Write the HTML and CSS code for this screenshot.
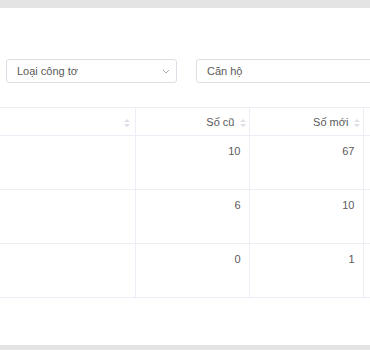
FILE: index.html
```html
<!DOCTYPE html>
<html lang="vi">
<head>
  <meta charset="UTF-8" />
  <title>Danh sách công tơ</title>
  <link rel="stylesheet" href="styles.css">
</head>
<body>
  <div class="card">
    <div class="filters">
      <div class="select select-type">
        <span>Loại công tơ</span>
        <svg class="chevron" width="8" height="5" viewBox="0 0 8 5"><path d="M1 1l3 3 3-3" fill="none" stroke="#a8abb2" stroke-width="1"/></svg>
      </div>
      <div class="select select-unit">
        <span>Căn hộ</span>
      </div>
    </div>

    <table class="meter-table">
      <colgroup>
        <col class="col-name">
        <col class="col-num">
        <col class="col-num">
        <col class="col-rest">
      </colgroup>
      <thead>
        <tr>
          <th class="th-name"><span class="sort"><svg width="6" height="8" viewBox="0 0 6 8"><path d="M3 0L6 3H0z M3 8L0 5h6z" fill="#dcdfe6"/></svg></span></th>
          <th class="th-num">Số cũ <span class="sort"><svg width="6" height="8" viewBox="0 0 6 8"><path d="M3 0L6 3H0z M3 8L0 5h6z" fill="#dcdfe6"/></svg></span></th>
          <th class="th-num">Số mới <span class="sort"><svg width="6" height="8" viewBox="0 0 6 8"><path d="M3 0L6 3H0z M3 8L0 5h6z" fill="#dcdfe6"/></svg></span></th>
          <th></th>
        </tr>
      </thead>
      <tbody>
        <tr><td></td><td class="num">10</td><td class="num">67</td><td></td></tr>
        <tr><td></td><td class="num">6</td><td class="num">10</td><td></td></tr>
        <tr><td></td><td class="num">0</td><td class="num">1</td><td></td></tr>
      </tbody>
    </table>
  </div>
</body>
</html>
```

FILE: styles.css
```css
body {
  margin: 0;
  background-color: #e4e4e4;
  font-family: "Liberation Sans", Arial, sans-serif;
  color: #5a5a5a;
  overflow: hidden;
}
.card {
  margin-top: 8px;
  height: 337px;
  background-color: #fff;
  overflow: hidden;
}
.filters {
  display: flex;
  padding: 51px 0 0 6px;
  gap: 19px;
}
.select {
  box-sizing: border-box;
  height: 24px;
  border: 1px solid #dcdfe6;
  border-radius: 3px;
  display: flex;
  align-items: center;
  padding: 0 6px 0 10px;
  font-size: 11px;
  color: #5a5a5a;
  flex-shrink: 0;
}
.select-type {
  width: 171px;
  justify-content: space-between;
}
.select-unit {
  width: 200px;
}
.meter-table {
  margin-top: 24px;
  border-collapse: collapse;
  table-layout: fixed;
  width: 423px;
  font-size: 11px;
}
.col-name {
  width: 135px;
}
.col-num {
  width: 114px;
}
.col-rest {
  width: 60px;
}
.meter-table th,
.meter-table td {
  box-sizing: border-box;
  border-top: 1px solid #ebeef5;
  border-bottom: 1px solid #ebeef5;
  border-left: 1px solid #ebeef5;
  padding: 0 8px;
}
.meter-table th:first-child,
.meter-table td:first-child {
  border-left: none;
}
.meter-table th {
  height: 28px;
  font-weight: normal;
  color: #5a5a5a;
  text-align: right;
  white-space: nowrap;
}
.meter-table th.th-name {
  padding-right: 5px;
}
.meter-table th.th-num {
  padding-right: 3px;
}
.meter-table td {
  height: 54px;
  vertical-align: top;
  padding-top: 9px;
}
.num {
  text-align: right;
}
.sort {
  display: inline-block;
  vertical-align: middle;
  margin-left: 2px;
}
.sort svg {
  display: block;
}
```
